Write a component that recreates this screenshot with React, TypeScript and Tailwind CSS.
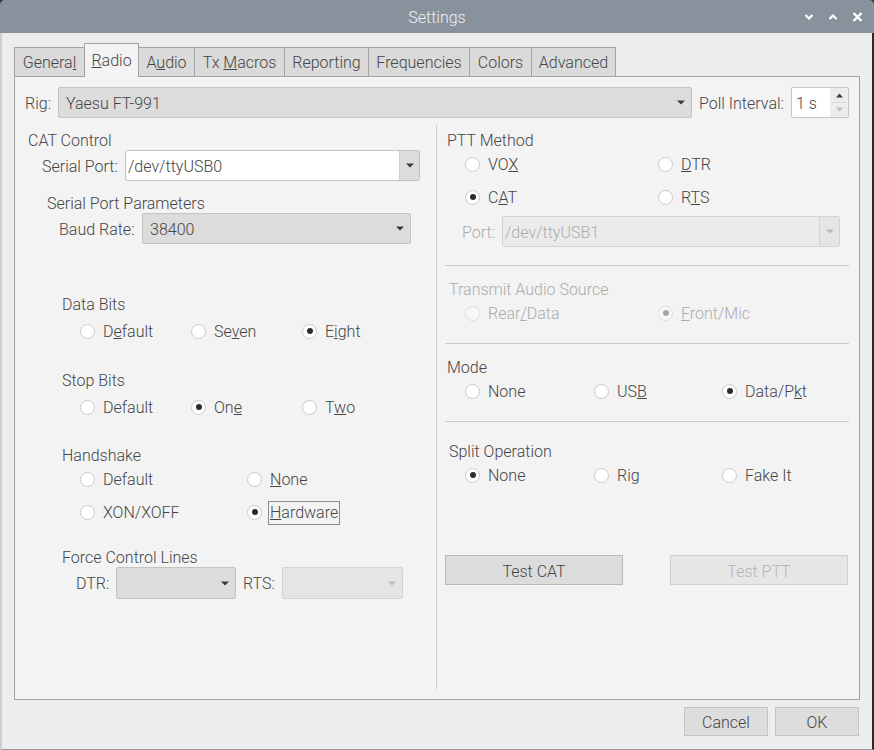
import React from "react";

const FONT = { fontFamily: "Roboto, 'Noto Sans', 'Liberation Sans', sans-serif" };

interface RadioProps {
  checked?: boolean;
  disabled?: boolean;
  focus?: boolean;
  className?: string;
  children: React.ReactNode;
}

const Radio = ({ checked, disabled, focus, className = "", children }: RadioProps) => (
  <div className={`flex shrink-0 items-center gap-[8px] ${className}`}>
    <span
      className={`flex h-[15px] w-[15px] shrink-0 items-center justify-center rounded-full border ${
        disabled ? "border-[#dedede] bg-[#f7f7f7]" : "border-[#cacaca] bg-white"
      }`}
    >
      {checked && (
        <span className={`h-[6px] w-[6px] rounded-full ${disabled ? "bg-[#a5a5a5]" : "bg-[#2b2b2b]"}`} />
      )}
    </span>
    <span
      className={`mt-[2px] leading-[20px] ${disabled ? "text-[#ababab]" : ""} ${
        focus ? "-ml-[2px] border border-[#8d8d8d] px-[1px] leading-[22px]" : ""
      }`}
    >
      {children}
    </span>
  </div>
);

const Arrow = ({ light }: { light?: boolean }) => (
  <svg width="8" height="5" viewBox="0 0 8 5" className="shrink-0">
    <path d="M0 0.5 L8 0.5 L4 4.5 Z" fill={light ? "#b9b9b9" : "#3a3a3a"} />
  </svg>
);

interface ComboProps {
  value?: string;
  disabled?: boolean;
  className?: string;
}

const Combo = ({ value = "", disabled, className = "" }: ComboProps) => (
  <div
    className={`flex h-full items-center justify-between rounded-[2px] border pl-[7px] pr-[6px] ${
      disabled ? "border-[#d3d3d3] bg-[#e5e5e5] text-[#ababab]" : "border-[#c3c3c3] bg-[#dcdcdc]"
    } ${className}`}
  >
    <span className="pt-[2px]">{value}</span>
    <Arrow light={disabled} />
  </div>
);

const EditCombo = ({ value, disabled, className = "" }: ComboProps) => (
  <div
    className={`flex h-full rounded-[2px] border ${
      disabled ? "border-[#d3d3d3] bg-[#ebebeb] text-[#ababab]" : "border-[#c3c3c3] bg-white"
    } ${className}`}
  >
    <div className="flex flex-1 items-center pl-[2px] pt-[2px]">{value}</div>
    <div
      className={`flex w-[20px] items-center justify-center border-l ${
        disabled ? "border-[#d3d3d3] bg-[#e5e5e5]" : "border-[#d0d0d0] bg-[#dcdcdc]"
      }`}
    >
      <Arrow light={disabled} />
    </div>
  </div>
);

const tabs = [
  { w: "w-[71px]", label: <>Genera<u>l</u></> },
  { w: "w-[55px]", label: <><u>R</u>adio</>, active: true },
  { w: "w-[57px]", label: <>A<u>u</u>dio</> },
  { w: "w-[91px]", label: <>Tx <u>M</u>acros</> },
  { w: "w-[85px]", label: <>Reportin<u>g</u></> },
  { w: "w-[102px]", label: <>Frequencies</> },
  { w: "w-[63px]", label: <>Colors</> },
  { w: "w-[85px]", label: <>Advanced</> },
];

const Sep = () => <div className="ml-[8px] mt-[20px] h-px w-[404px] bg-[#c9c9c9]" />;

export default function App() {
  return (
    <div
      style={FONT}
      className="flex h-[750px] w-[874px] flex-col overflow-hidden bg-[#3a3a3a] text-[16px] font-light text-[#454545]"
    >
      {/* title bar */}
      <div className="relative flex h-[33px] shrink-0 items-center justify-center rounded-t-[5px] bg-[#88929c]">
        <span className="pt-[2px] text-[16px] text-[#eef1f4]">Settings</span>
        <div className="absolute right-[11px] top-[12px] flex items-center gap-[14px]">
          <svg width="10" height="8" viewBox="0 0 10 8">
            <path d="M1.5 2 L5 5.5 L8.5 2" stroke="#fff" strokeWidth="2.2" fill="none" />
          </svg>
          <svg width="10" height="8" viewBox="0 0 10 8">
            <path d="M1.5 6 L5 2.5 L8.5 6" stroke="#fff" strokeWidth="2.2" fill="none" />
          </svg>
          <svg width="11" height="10" viewBox="0 0 11 10">
            <path d="M1.5 1 L9.5 9 M9.5 1 L1.5 9" stroke="#fff" strokeWidth="2.4" fill="none" />
          </svg>
        </div>
      </div>

      {/* window body */}
      <div className="flex flex-1 flex-col border-l-2 border-r-2 border-b border-l-[#cfcfcf] border-r-[#2a2a2a] border-b-[#9a9a9a] bg-[#ededed] px-[12px]">
        {/* tab bar */}
        <div className="relative z-10 -mb-px mt-[10px] flex items-end">
          {tabs.map((t, i) => (
            <div
              key={i}
              className={`flex items-center justify-center border border-[#a3a3a3] ${t.w} ${
                i > 0 ? "-ml-px" : ""
              } ${
                t.active
                  ? "relative z-10 h-[34px] border-b-0 bg-[#f3f3f3]"
                  : "h-[30px] bg-[#dadada]"
              }`}
            >
              <span className={t.active ? "" : "pt-[2px]"}>{t.label}</span>
            </div>
          ))}
        </div>

        {/* tab pane */}
        <div className="flex h-[624px] flex-col border border-[#a3a3a3] bg-[#f3f3f3]">
          {/* rig row */}
          <div className="mt-[10px] flex h-[31px] items-center pl-[10px]">
            <span className="w-[33px] pt-[2px]">Rig:</span>
            <Combo value="Yaesu FT-991" className="w-[634px]" />
            <span className="ml-[7px] w-[92px] pt-[2px]">Poll Interval:</span>
            <div className="flex h-[31px] w-[58px] rounded-[2px] border border-[#c8c8c8] bg-white">
              <div className="flex flex-1 items-center pl-[4px] pt-[2px]">1 s</div>
              <div className="flex w-[18px] flex-col items-center justify-between bg-[#ececec] py-[5px]">
                <svg width="7" height="5" viewBox="0 0 7 5">
                  <path d="M0 4.5 L7 4.5 L3.5 0.5 Z" fill="#3a3a3a" />
                </svg>
                <div className="h-px w-[14px] bg-[#d6d6d6]" />
                <svg width="7" height="5" viewBox="0 0 7 5">
                  <path d="M0 0.5 L7 0.5 L3.5 4.5 Z" fill="#bdbdbd" />
                </svg>
              </div>
            </div>
          </div>

          {/* columns */}
          <div className="mt-[7px] flex h-[564px]">
            {/* left column */}
            <div className="flex w-[421px] flex-col">
              <div className="mt-[5px] h-[20px] pl-[13px] leading-[22px]">CAT Control</div>
              <div className="flex h-[31px] items-center pl-[27px]">
                <span className="w-[83px] pt-[2px]">Serial Port:</span>
                <EditCombo value="/dev/ttyUSB0" className="w-[295px]" />
              </div>
              <div className="mt-[12px] h-[20px] pl-[32px] leading-[22px]">Serial Port Parameters</div>
              <div className="flex h-[31px] items-center pl-[44px]">
                <span className="w-[83px] pt-[2px]">Baud Rate:</span>
                <Combo value="38400" className="w-[269px]" />
              </div>

              <div className="mt-[50px] h-[20px] pl-[47px] leading-[22px]">Data Bits</div>
              <div className="mt-[7px] flex h-[20px] pl-[65px]">
                <Radio className="w-[111px]">D<u>e</u>fault</Radio>
                <Radio className="w-[111px]">Se<u>v</u>en</Radio>
                <Radio checked>E<u>i</u>ght</Radio>
              </div>

              <div className="mt-[29px] h-[20px] pl-[47px] leading-[22px]">Stop Bits</div>
              <div className="mt-[7px] flex h-[20px] pl-[65px]">
                <Radio className="w-[111px]">Default</Radio>
                <Radio checked className="w-[111px]">On<u>e</u></Radio>
                <Radio>T<u>w</u>o</Radio>
              </div>

              <div className="mt-[28px] h-[20px] pl-[47px] leading-[22px]">Handshake</div>
              <div className="mt-[4px] flex h-[20px] pl-[65px]">
                <Radio className="w-[167px]">Default</Radio>
                <Radio><u>N</u>one</Radio>
              </div>
              <div className="mt-[13px] flex h-[20px] pl-[65px]">
                <Radio className="w-[167px]">XON/XOFF</Radio>
                <Radio checked focus><u>H</u>ardware</Radio>
              </div>

              <div className="mt-[25px] h-[20px] pl-[47px] leading-[22px]">Force Control Lines</div>
              <div className="flex h-[32px] items-center pl-[61px]">
                <span className="w-[40px] pt-[2px]">DTR:</span>
                <Combo className="w-[120px]" />
                <span className="ml-[7px] w-[39px] pt-[2px]">RTS:</span>
                <Combo disabled className="w-[121px]" />
              </div>
            </div>

            <div className="w-px bg-[#cdcdcd]" />

            {/* right column */}
            <div className="flex flex-1 flex-col">
              <div className="mt-[5px] h-[20px] pl-[10px] leading-[22px]">PTT Method</div>
              <div className="mt-[4px] flex h-[20px] pl-[28px]">
                <Radio className="w-[193px]">VO<u>X</u></Radio>
                <Radio><u>D</u>TR</Radio>
              </div>
              <div className="mt-[13px] flex h-[20px] pl-[28px]">
                <Radio checked className="w-[193px]">C<u>A</u>T</Radio>
                <Radio>R<u>T</u>S</Radio>
              </div>
              <div className="mt-[9px] flex h-[31px] items-center pl-[25px] text-[#ababab]">
                <span className="w-[40px] pt-[2px]">Port:</span>
                <EditCombo disabled value="/dev/ttyUSB1" className="w-[338px]" />
              </div>

              <div className="ml-[8px] mt-[18px] h-px w-[404px] bg-[#c9c9c9]" />

              <div className="mt-[13px] h-[20px] pl-[12px] leading-[22px] text-[#ababab]">
                Transmit Audio Source
              </div>
              <div className="mt-[4px] flex h-[20px] pl-[28px]">
                <Radio disabled className="w-[193px]">Rear<u>/</u>Data</Radio>
                <Radio disabled checked><u>F</u>ront/Mic</Radio>
              </div>

              <Sep />

              <div className="mt-[13px] h-[20px] pl-[10px] leading-[22px]">Mode</div>
              <div className="mt-[4px] flex h-[20px] pl-[28px]">
                <Radio className="w-[129px]">None</Radio>
                <Radio className="w-[128px]">US<u>B</u></Radio>
                <Radio checked>Data/P<u>k</u>t</Radio>
              </div>

              <Sep />

              <div className="mt-[19px] h-[20px] pl-[12px] leading-[22px]">Split Operation</div>
              <div className="mt-[4px] flex h-[20px] pl-[28px]">
                <Radio checked className="w-[129px]">None</Radio>
                <Radio className="w-[128px]">Rig</Radio>
                <Radio>Fake It</Radio>
              </div>

              <div className="ml-[8px] mt-[70px] flex h-[30px] gap-[47px]">
                <button className="w-[178px] border border-[#b9b9b9] bg-[#dcdcdc] pt-[3px] text-[#454545]">
                  Test CAT
                </button>
                <button className="w-[178px] border border-[#cfcfcf] bg-[#e6e6e6] pt-[3px] text-[#b3b3b3]">
                  Test PTT
                </button>
              </div>
            </div>
          </div>
        </div>

        {/* dialog buttons */}
        <div className="mt-[7px] flex justify-end gap-[7px] pr-px">
          <button className="h-[29px] w-[84px] border border-[#c3c3c3] bg-[#dddddd] pt-[3px] text-[#454545]">
            Cancel
          </button>
          <button className="h-[29px] w-[84px] border border-[#c3c3c3] bg-[#dddddd] pt-[3px] text-[#454545]">
            OK
          </button>
        </div>
      </div>
    </div>
  );
}
